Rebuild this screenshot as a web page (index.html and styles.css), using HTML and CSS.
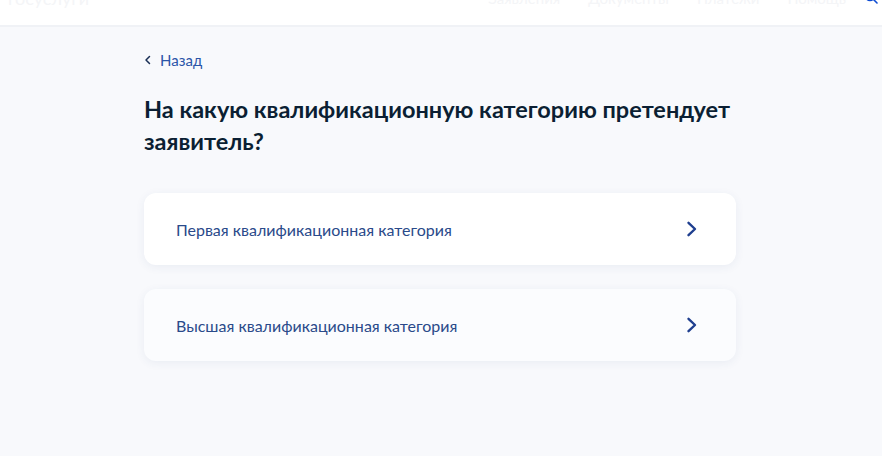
FILE: index.html
```html
<!DOCTYPE html>
<html lang="ru">
<head>
    <meta charset="UTF-8">
    <meta name="viewport" content="width=device-width, initial-scale=1.0">
    <title>Квалификационная категория</title>
    <link rel="stylesheet" href="styles.css">
</head>
<body>
    <header class="top-bar">
        <div class="top-bar__inner">
            <span class="top-bar__logo">госуслуги</span>
            <nav class="top-bar__nav">
                <a href="#">Заявления</a>
                <a href="#">Документы</a>
                <a href="#">Платежи</a>
                <a href="#">Помощь</a>
            </nav>
            <svg class="top-bar__search" width="14" height="14" viewBox="0 0 14 14">
                <circle cx="6" cy="6" r="4.5" fill="none" stroke="#0d4cd3" stroke-width="1.6"/>
                <path d="M9.5 9.5 L13 13" stroke="#0d4cd3" stroke-width="1.6" stroke-linecap="round"/>
            </svg>
        </div>
    </header>
    <main class="page">
        <a class="back-link" href="#">
            <svg width="8" height="10" viewBox="0 0 8 10">
                <path d="M5.5 1.5 L2 5 L5.5 8.5" fill="none" stroke="#1a2f55" stroke-width="1.5" stroke-linecap="round" stroke-linejoin="round"/>
            </svg>
            <span>Назад</span>
        </a>
        <h1 class="question">На какую квалификационную категорию претендует заявитель?</h1>
        <div class="options">
            <a class="option" href="#">
                <span>Первая квалификационная категория</span>
                <svg width="12" height="16" viewBox="0 0 12 16">
                    <path d="M2.5 1.8 L9 8 L2.5 14.2" fill="none" stroke="#1f3f8f" stroke-width="2.4" stroke-linecap="round" stroke-linejoin="round"/>
                </svg>
            </a>
            <a class="option option--muted" href="#">
                <span>Высшая квалификационная категория</span>
                <svg width="12" height="16" viewBox="0 0 12 16">
                    <path d="M2.5 1.8 L9 8 L2.5 14.2" fill="none" stroke="#1f3f8f" stroke-width="2.4" stroke-linecap="round" stroke-linejoin="round"/>
                </svg>
            </a>
        </div>
    </main>
</body>
</html>
```

FILE: styles.css
```css
body {
    margin: 0;
    padding: 0;
    font-family: Lato, "Noto Sans", sans-serif;
    background-color: #f8f9fc;
    color: #0b1f33;
    height: 456px;
    overflow: hidden;
}

.top-bar {
    height: 25px;
    background: #ffffff;
    border-bottom: 2px solid #f0f2f6;
    overflow: hidden;
}

.top-bar__inner {
    display: flex;
    align-items: center;
    justify-content: space-between;
    margin-top: -17px;
    padding: 0 4px 0 8px;
    height: 30px;
}

.top-bar__logo {
    font-size: 18px;
    color: #f4f5f7;
}

.top-bar__nav {
    display: flex;
    gap: 28px;
    margin-left: auto;
    margin-right: 18px;
}

.top-bar__nav a {
    color: #f4f5f7;
    text-decoration: none;
    font-size: 15px;
}

.top-bar__search {
    margin-top: -2px;
}

.page {
    width: 592px;
    margin: 0 auto;
    padding-top: 22px;
    position: relative;
    left: -1px;
}

.back-link {
    display: inline-flex;
    align-items: center;
    gap: 8px;
    color: #2b55a8;
    text-decoration: none;
    font-size: 15px;
    line-height: 20px;
}

.question {
    margin: 23px 0 36px;
    font-size: 23.5px;
    line-height: 32px;
    font-weight: 700;
    color: #0b1f33;
}

.options {
    display: flex;
    flex-direction: column;
    gap: 24px;
}

.option {
    display: flex;
    align-items: center;
    justify-content: space-between;
    height: 72px;
    padding: 0 38px 0 32px;
    box-sizing: border-box;
    background: #ffffff;
    border-radius: 12px;
    box-shadow: 0 2px 10px rgba(39, 70, 130, 0.07);
    text-decoration: none;
    color: #2a4a8a;
    font-size: 16px;
}

.option--muted {
    background: #fbfcfe;
}
```
